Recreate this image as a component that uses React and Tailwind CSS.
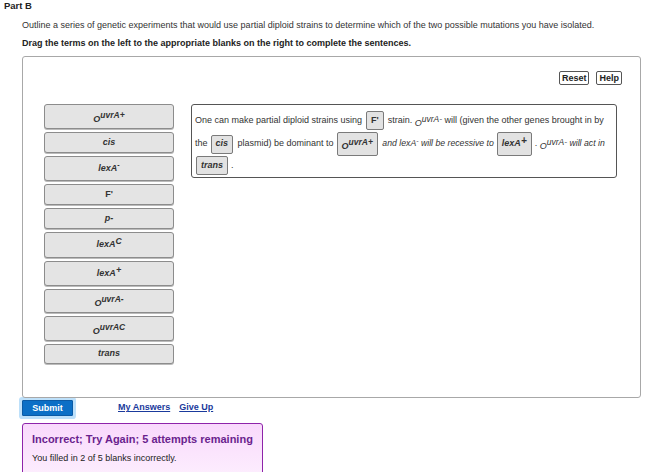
import React from "react";

const F = { fontFamily: '"Liberation Sans", Arial, Helvetica, sans-serif' };

function Sup({ base, sup }) {
  return (
    <span className="inline-flex items-start">
      <span className="relative top-[3px] text-[9px]">{base}</span>
      <span className="text-[8.5px] relative -top-[1px]">{sup}</span>
    </span>
  );
}

const tiles = [
  { h: 25, c: <Sup base="O" sup="uvrA+" /> },
  { h: 21, c: <span>cis</span> },
  { h: 25, c: <span>lexA<sup className="text-[7px]">-</sup></span> },
  { h: 21, c: <span className="not-italic">F'</span> },
  { h: 21, c: <span>p-</span> },
  { h: 26, c: <span>lexA<span className="text-[8.5px] relative -top-[3px]">C</span></span> },
  { h: 25, c: <span>lexA<span className="text-[9px] relative -top-[3px]">+</span></span> },
  { h: 24, c: <Sup base="O" sup="uvrA-" /> },
  { h: 25, c: <Sup base="O" sup="uvrAC" /> },
  { h: 20, c: <span>trans</span> },
];

function Blank({ children, h, cls = "" }) {
  return (
    <span
      className={`inline-flex items-center justify-center px-[4px] bg-[#e2e2e2] border border-[#7a7a7a] rounded-[2px] font-bold italic text-[#333] ${cls}`}
      style={{ height: h }}
    >
      {children}
    </span>
  );
}

export default function App() {
  return (
    <div style={F} className="w-[653px] h-[472px] overflow-hidden bg-white text-[#222] relative">
      <div className="pl-[4px] pt-[0px] text-[9.5px] font-bold leading-[11px]">Part B</div>
      <div className="pl-[22px] mt-[9px] text-[9px] leading-[10px] text-[#333]">
        Outline a series of genetic experiments that would use partial diploid strains to determine which of the two possible mutations you have isolated.
      </div>
      <div className="pl-[22px] mt-[8px] text-[9px] leading-[10px] font-bold text-[#222]">
        Drag the terms on the left to the appropriate blanks on the right to complete the sentences.
      </div>

      <div className="ml-[22px] mt-[8px] w-[619px] h-[342px] border border-[#a8a8a8] rounded-[3px] relative">
        <div className="flex justify-end gap-[7px] pr-[18px] pt-[14px]">
          <button className="h-[14px] px-[2px] border border-[#555] rounded-[2px] bg-white text-[9px] font-bold leading-none text-[#222]">Reset</button>
          <button className="h-[14px] px-[2px] border border-[#555] rounded-[2px] bg-white text-[9px] font-bold leading-none text-[#222]">Help</button>
        </div>

        <div className="flex mt-[19px] pl-[21px]">
          <div className="flex flex-col gap-[3px] w-[130px]">
            {tiles.map((t, i) => (
              <div
                key={i}
                className="flex items-center justify-center bg-[#e4e4e4] border border-[#8c8c8c] rounded-[3px] text-[9px] font-bold italic text-[#333] shadow-[0_1px_0_#bbb]"
                style={{ height: t.h }}
              >
                {t.c}
              </div>
            ))}
          </div>

          <div className="ml-[17px] w-[426px] h-[74px] border border-[#555] rounded-[3px] pl-[3px] pt-[6px] text-[9px] text-[#333]">
            <div className="flex items-center h-[19px] whitespace-nowrap">
              <span>One can make partial diploid strains using</span>
              <Blank h={19} cls="not-italic mx-[4px]">F'</Blank>
              <span>strain.&nbsp;</span>
              <span className="italic"><Sup base="O" sup="uvrA-" /></span>
              <span>&nbsp;will (given the other genes brought in by</span>
            </div>
            <div className="flex items-center h-[24px] mt-[2px] whitespace-nowrap">
              <span>the</span>
              <Blank h={19} cls="ml-[3px] mr-[2px]">cis</Blank>
              <span>&nbsp;plasmid) be dominant to</span>
              <Blank h={24} cls="ml-[3px] mr-[2px]"><Sup base="O" sup="uvrA+" /></Blank>
              <span className="italic text-[8.7px]">&nbsp;and lexA<sup className="text-[7px]">-</sup> will be recessive to</span>
              <Blank h={24} cls="ml-[3px] mr-[3px]">lexA<span className="text-[10px] relative -top-[4px]">+</span></Blank>
              <span>.&nbsp;</span>
              <span className="italic"><Sup base="O" sup="uvrA-" /></span>
              <span className="italic text-[8.7px]">&nbsp;will act in</span>
            </div>
            <div className="flex items-center h-[19px] whitespace-nowrap">
              <Blank h={19} cls="ml-[1px] mr-[3px]">trans</Blank>
              <span>.</span>
            </div>
          </div>
        </div>
      </div>

      <div className="flex items-center mt-[2px] pl-[22px]">
        <button className="h-[16px] w-[51px] bg-[#0b6fc6] border border-[#0a5aa5] rounded-[1px] text-white text-[9px] font-bold leading-none ring-[3px] ring-[#bde0fa]">
          Submit
        </button>
        <a className="ml-[45px] text-[9px] font-bold underline text-[#1a3a9c]">My Answers</a>
        <a className="ml-[9px] text-[9px] font-bold underline text-[#1a3a9c]">Give Up</a>
      </div>

      <div className="ml-[22px] mt-[7px] w-[241px] h-[60px] border border-[#8e24aa] rounded-t-[3px] bg-gradient-to-b from-[#f9d9fc] to-[#fdf0fe] px-[9px] pt-[9px]">
        <div className="text-[11px] font-bold text-[#6a1f8e] leading-[12px]">Incorrect; Try Again; 5 attempts remaining</div>
        <div className="text-[9px] text-[#222] mt-[8px] leading-[10px]">You filled in 2 of 5 blanks incorrectly.</div>
      </div>
    </div>
  );
}
